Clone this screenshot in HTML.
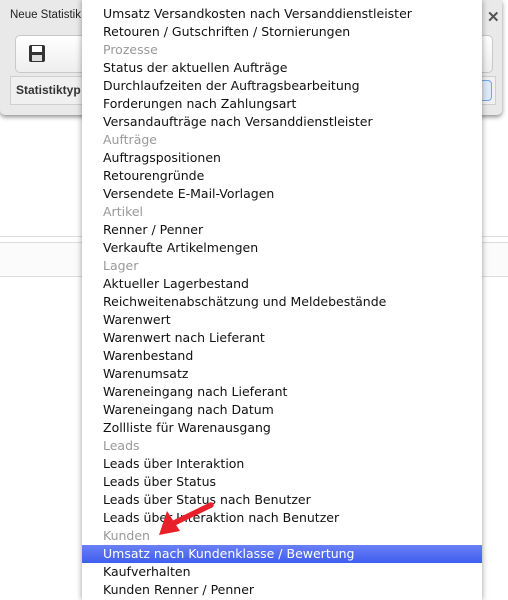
<!DOCTYPE html>
<html><head><meta charset="utf-8"><style>
body{margin:0;width:508px;height:599px;overflow:hidden;background:#fff;position:relative;font-family:"DejaVu Sans","Liberation Sans",sans-serif}
.dlg{position:absolute;left:0;top:0;width:502px;height:115px;background:#e9e9e9;border-radius:0 0 5px 5px;box-shadow:0 2px 5px rgba(0,0,0,.45)}
.title{position:absolute;left:10px;top:9px;font-size:11.5px;color:#222;font-family:"Liberation Sans",sans-serif}
.x{position:absolute;left:487px;top:8px;font-size:15px;font-weight:bold;color:#555;font-family:"Liberation Sans",sans-serif}
.tb{position:absolute;left:15px;top:35px;width:476px;height:36px;background:linear-gradient(#fff,#eee);border:1px solid #c8c8c8;border-radius:5px}
.row2{position:absolute;left:10px;top:76px;width:484px;height:27px;background:#f0f0f0;border:1px solid #cfcfcf}
.lbl{position:absolute;left:5px;top:6px;font-size:12px;font-weight:bold;color:#333;font-family:"Liberation Sans",sans-serif}
.sel{position:absolute;right:3px;top:3px;width:14px;height:19px;border:1px solid #6ea6ee;border-radius:4px;background:#dfe9f8}
.band{position:absolute;left:0;width:508px;border-top:1px solid #ddd}
.menu{position:absolute;left:82px;top:0;width:400px;height:600px;background:#fff;box-shadow:0 0 6px rgba(0,0,0,.4)}
.it{position:absolute;left:0;width:400px;height:18px;line-height:18px;font-size:12.5px;color:#111;padding-left:21px;box-sizing:border-box;white-space:nowrap}
.g{color:#999}
.h{background:linear-gradient(#6a80f5,#3f5ef0);color:#fff}
</style></head><body>
<div class="band" style="top:236px"></div>
<div class="band" style="top:242px;height:33px;background:#fbfbfb;border-bottom:1px solid #ddd"></div>
<div class="dlg">
<div class="title">Neue Statistik</div>
<div class="x">✕</div>
<div class="tb"><svg style="position:absolute;left:13px;top:9px" width="16" height="17"><rect x="0" y="0" width="16" height="17" rx="2" fill="#333"/><rect x="3" y="1" width="10" height="6" fill="#fff"/><rect x="3" y="10" width="10" height="6" fill="#ddd"/></svg></div>
<div class="row2"><div class="lbl">Statistiktyp</div><div class="sel"></div></div>
</div>
<div class="menu">
<div class="it" style="top:-13px">Umsatz Versandkosten nach Versandart</div>
<div class="it" style="top:5px">Umsatz Versandkosten nach Versanddienstleister</div>
<div class="it" style="top:23px">Retouren / Gutschriften / Stornierungen</div>
<div class="it g" style="top:41px">Prozesse</div>
<div class="it" style="top:59px">Status der aktuellen Aufträge</div>
<div class="it" style="top:77px">Durchlaufzeiten der Auftragsbearbeitung</div>
<div class="it" style="top:95px">Forderungen nach Zahlungsart</div>
<div class="it" style="top:113px">Versandaufträge nach Versanddienstleister</div>
<div class="it g" style="top:131px">Aufträge</div>
<div class="it" style="top:149px">Auftragspositionen</div>
<div class="it" style="top:167px">Retourengründe</div>
<div class="it" style="top:185px">Versendete E-Mail-Vorlagen</div>
<div class="it g" style="top:203px">Artikel</div>
<div class="it" style="top:221px">Renner / Penner</div>
<div class="it" style="top:239px">Verkaufte Artikelmengen</div>
<div class="it g" style="top:257px">Lager</div>
<div class="it" style="top:275px">Aktueller Lagerbestand</div>
<div class="it" style="top:293px">Reichweitenabschätzung und Meldebestände</div>
<div class="it" style="top:311px">Warenwert</div>
<div class="it" style="top:329px">Warenwert nach Lieferant</div>
<div class="it" style="top:347px">Warenbestand</div>
<div class="it" style="top:365px">Warenumsatz</div>
<div class="it" style="top:383px">Wareneingang nach Lieferant</div>
<div class="it" style="top:401px">Wareneingang nach Datum</div>
<div class="it" style="top:419px">Zollliste für Warenausgang</div>
<div class="it g" style="top:437px">Leads</div>
<div class="it" style="top:455px">Leads über Interaktion</div>
<div class="it" style="top:473px">Leads über Status</div>
<div class="it" style="top:491px">Leads über Status nach Benutzer</div>
<div class="it" style="top:509px">Leads über Interaktion nach Benutzer</div>
<div class="it g" style="top:527px">Kunden</div>
<div class="it h" style="top:545px">Umsatz nach Kundenklasse / Bewertung</div>
<div class="it" style="top:563px">Kaufverhalten</div>
<div class="it" style="top:581px">Kunden Renner / Penner</div>
</div>
<svg style="position:absolute;left:0;top:0" width="508" height="599">
<line x1="211" y1="505" x2="172" y2="524" stroke="#e8202a" stroke-width="5.5" stroke-linecap="round"/>
<polygon points="159,535 167,511 180,531" fill="#e8202a"/>
</svg>
</body></html>
